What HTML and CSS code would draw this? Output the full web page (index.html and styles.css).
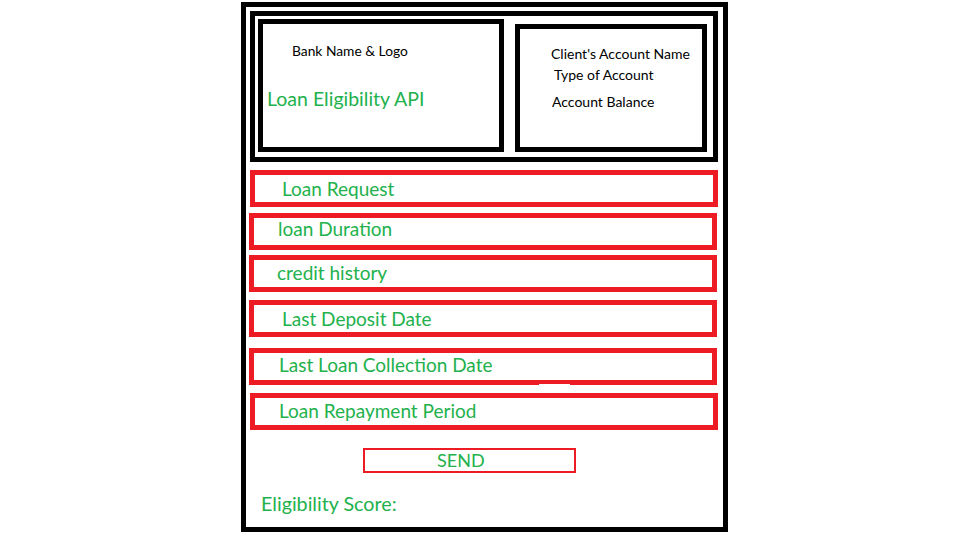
FILE: index.html
```html
<!DOCTYPE html>
<html>
<head>
<meta charset="utf-8">
<link rel="stylesheet" href="styles.css">
</head>
<body>
<div class="page">
  <div class="header">
    <div class="bank">
      <div class="bank-name">Bank Name &amp; Logo</div>
      <div class="api-title">Loan Eligibility API</div>
    </div>
    <div class="account">
      <div class="acc-line acc-name">Client's Account Name</div>
      <div class="acc-line acc-type">Type of Account</div>
      <div class="acc-line acc-bal">Account Balance</div>
    </div>
  </div>
  <div class="fields">
    <div class="field f1">Loan Request</div>
    <div class="field f2">loan Duration</div>
    <div class="field f3">credit history</div>
    <div class="field f4">Last Deposit Date</div>
    <div class="field f5">Last Loan Collection Date</div>
    <div class="field f6">Loan Repayment Period</div>
  </div>
  <div class="send">SEND</div>
  <div class="score">Eligibility Score:</div>
</div>
</body>
</html>
```
FILE: styles.css
```css
html, body {
  margin: 0;
  padding: 0;
  background: #fff;
}
body {
  font-family: Lato, "Open Sans", sans-serif;
}
.page {
  box-sizing: border-box;
  width: 487px;
  height: 530px;
  margin: 2px 0 0 241px;
  border: 5px solid #000;
  padding: 4px 0 0 3px;
}
.header {
  box-sizing: border-box;
  width: 468px;
  height: 151px;
  margin-left: 1px;
  border: 5px solid #000;
  padding: 3px 6px 0 3px;
  display: flex;
  align-items: flex-start;
  gap: 11px;
}
.bank {
  box-sizing: border-box;
  width: 246px;
  height: 133px;
  border: 5px solid #000;
  padding: 0 0 0 4px;
}
.bank-name {
  color: #000;
  font-size: 13.8px;
  margin: 19px 0 0 25px;
  line-height: 16px;
}
.api-title {
  color: #22b14c;
  font-size: 19.5px;
  line-height: 22px;
  margin-top: 29px;
}
.account {
  box-sizing: border-box;
  width: 192px;
  height: 128px;
  margin-top: 5px;
  border: 5px solid #000;
  padding: 17px 0 0 31px;
  color: #000;
  font-size: 14px;
  line-height: 16px;
}
.acc-type { margin: 5px 0 0 3px; }
.acc-bal { margin: 11px 0 0 1px; }
.fields {
  margin-top: 8px;
  display: flex;
  flex-direction: column;
}
.field {
  position: relative;
  box-sizing: border-box;
  width: 468px;
  height: 37px;
  border: 5px solid #ed1c24;
  color: #22b14c;
  font-size: 19px;
  display: flex;
  align-items: center;
  padding-left: 24px;
}
.f1 { margin-left: 1px; padding-left: 27px; padding-bottom: 1px; }
.f2 { margin-top: 6px; padding-left: 24px; padding-bottom: 6px; }
.f3 { margin-top: 5px; padding-left: 23px; padding-bottom: 3px; }
.f4 { margin-top: 8px; padding-left: 28px; padding-bottom: 1px; }
.f5 { margin-top: 11px; padding-left: 25px; padding-bottom: 4px; }
.f6 { margin-top: 8px; margin-left: 1px; padding-left: 24px; padding-bottom: 3px; }
.f5::after {
  content: "";
  position: absolute;
  left: 285px;
  bottom: -7px;
  width: 31px;
  height: 3px;
  background: #fff;
}
.send {
  box-sizing: border-box;
  width: 213px;
  height: 25px;
  margin: 18px 0 0 114px;
  border: 2px solid #ed1c24;
  color: #22b14c;
  font-size: 18px;
  line-height: 21px;
  padding-left: 72px;
}
.score {
  color: #22b14c;
  font-size: 19.7px;
  line-height: 24px;
  margin: 19px 0 0 12px;
}
```
